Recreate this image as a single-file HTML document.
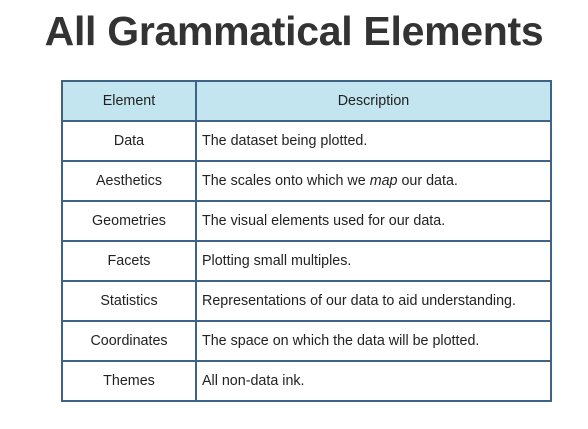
<!DOCTYPE html>
<html><head><style>
body{margin:0;width:588px;height:429px;background:#fff;overflow:hidden;font-family:"Liberation Sans",sans-serif;}
h1{position:absolute;top:8px;left:0;width:588px;margin:0;text-align:center;font-size:41px;font-weight:bold;color:#333;letter-spacing:-0.3px;}
table{position:absolute;left:61px;top:80px;width:491px;border-collapse:collapse;}
td,th{border:2px solid #3f6385;height:38px;font-size:14.3px;color:#222;font-weight:normal;padding:0 5px;}
th{background:#c2e5ef;}
td:first-child,th:first-child{width:122px;text-align:center;}
td:nth-child(2){text-align:left;}
</style></head><body>
<h1>All Grammatical Elements</h1>
<table>
<tr><th>Element</th><th>Description</th></tr>
<tr><td>Data</td><td>The dataset being plotted.</td></tr>
<tr><td>Aesthetics</td><td>The scales onto which we <i>map</i> our data.</td></tr>
<tr><td>Geometries</td><td>The visual elements used for our data.</td></tr>
<tr><td>Facets</td><td>Plotting small multiples.</td></tr>
<tr><td>Statistics</td><td>Representations of our data to aid understanding.</td></tr>
<tr><td>Coordinates</td><td>The space on which the data will be plotted.</td></tr>
<tr><td>Themes</td><td>All non-data ink.</td></tr>
</table>
</body></html>
